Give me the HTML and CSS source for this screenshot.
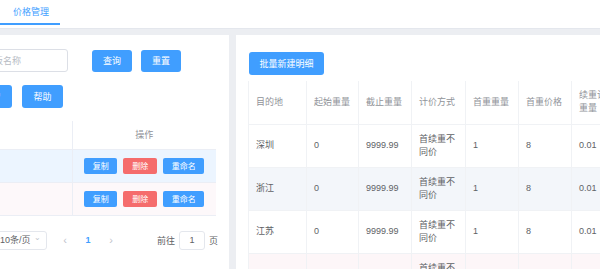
FILE: index.html
```
<!DOCTYPE html>
<html lang="zh-CN">

<head>
    <meta charset="UTF-8">
    <meta name="viewport" content="width=device-width, initial-scale=1.0">
    <title>价格管理</title>

    <link rel="stylesheet" href="styles.css">
</head>

<body>

    <header class="topbar">
        <div class="tab">价格管理</div>
    </header>

    <main class="page">

        <section class="card left">
            <div class="left-inner">

                <div class="form-row">
                    <input class="input name" type="text" placeholder="请输入模板名称">
                    <button class="btn query">查询</button>
                    <button class="btn">重置</button>
                </div>

                <div class="form-row second">
                    <button class="btn add">新增</button>
                    <button class="btn">帮助</button>
                </div>

                <table class="tpl-table">
                    <thead>
                        <tr>
                            <th class="col-name"></th>
                            <th class="col-op">操作</th>
                        </tr>
                    </thead>
                    <tbody>
                        <tr class="current">
                            <td></td>
                            <td class="ops">
                                <button class="mini">复制</button>
                                <button class="mini danger">删除</button>
                                <button class="mini wide">重命名</button>
                            </td>
                        </tr>
                        <tr class="hover">
                            <td></td>
                            <td class="ops">
                                <button class="mini">复制</button>
                                <button class="mini danger">删除</button>
                                <button class="mini wide">重命名</button>
                            </td>
                        </tr>
                    </tbody>
                </table>

                <div class="pager">
                    <div class="size-select">10条/页 <span class="arrow">&#8964;</span></div>
                    <span class="pg-btn">&lsaquo;</span>
                    <span class="pg-num">1</span>
                    <span class="pg-btn">&rsaquo;</span>
                    <span class="goto">前往</span>
                    <div class="goto-input">1</div>
                    <span class="goto-unit">页</span>
                </div>

            </div>
        </section>

        <section class="card right">
            <button class="btn batch">批量新建明细</button>

            <table class="detail-table">
                <thead>
                    <tr>
                        <th style="width: 58px">目的地</th>
                        <th style="width: 52px">起始重量</th>
                        <th style="width: 53px">截止重量</th>
                        <th style="width: 54px">计价方式</th>
                        <th style="width: 53px">首重重量</th>
                        <th style="width: 53px">首重价格</th>
                        <th style="width: 53px">续重计费重量</th>
                        <th style="width: 53px">续重价格</th>
                    </tr>
                </thead>
                <tbody>
                    <tr>
                        <td>深圳</td><td>0</td><td>9999.99</td><td>首续重不同价</td><td>1</td><td>8</td><td>0.01</td><td>1</td>
                    </tr>
                    <tr class="stripe">
                        <td>浙江</td><td>0</td><td>9999.99</td><td>首续重不同价</td><td>1</td><td>8</td><td>0.01</td><td>1</td>
                    </tr>
                    <tr>
                        <td>江苏</td><td>0</td><td>9999.99</td><td>首续重不同价</td><td>1</td><td>8</td><td>0.01</td><td>1</td>
                    </tr>
                    <tr class="hover">
                        <td>上海</td><td>0</td><td>9999.99</td><td>首续重不同价</td><td>1</td><td>8</td><td>0.01</td><td>1</td>
                    </tr>
                </tbody>
            </table>
        </section>

    </main>

</body>

</html>
```

FILE: styles.css
```
* {
    box-sizing: border-box;
}

body {
    margin: 0;
    width: 600px;
    height: 269px;
    overflow: hidden;
    background-color: #eceef2;
    font-family: "Liberation Sans", "Noto Sans CJK SC", sans-serif;
    font-size: 9px;
    color: #606266;
}

.topbar {
    height: 29px;
    background-color: #fff;
    border-bottom: 1px solid #e4e7ed;
}

.tab {
    width: 60px;
    height: 25px;
    padding-left: 13px;
    line-height: 25px;
    color: #409eff;
    border-bottom: 2px solid #409eff;
}

.page {
    display: flex;
    gap: 7px;
    padding-top: 6px;
    height: 240px;
}

.card {
    background-color: #fff;
    overflow: hidden;
}

.left {
    width: 229px;
    flex-shrink: 0;
}

/* content is cut on the left, like in the screenshot */
.left-inner {
    margin-left: -60px;
    width: 289px;
    padding-top: 14px;
}

.form-row {
    display: flex;
    align-items: center;
    gap: 9px;
    height: 23px;
}

.form-row.second {
    margin-top: 13px;
    gap: 10px;
}

.input {
    width: 128px;
    height: 23px;
    border: 1px solid #dcdfe6;
    border-radius: 3px;
    padding: 0 8px 0 17px;
    font-family: inherit;
    font-size: 9px;
    color: #606266;
}

.input::placeholder {
    color: #b8bcc4;
}

.query {
    margin-left: 15px;
}

.add {
    margin-left: 31px;
}

.btn {
    height: 22px;
    padding: 0 11px;
    border: none;
    border-radius: 3px;
    background-color: #409eff;
    color: #fff;
    font-family: inherit;
    font-size: 9px;
    white-space: nowrap;
}

.second .btn {
    height: 23px;
    width: 41px;
    padding: 0;
}

.tpl-table {
    margin-top: 13px;
    width: 276px;
    border-collapse: collapse;
    table-layout: fixed;
}

.tpl-table th {
    height: 28px;
    font-weight: normal;
    color: #909399;
    border-bottom: 1px solid #ebeef5;
}

.tpl-table th.col-name {
    width: 132px;
}

.tpl-table th.col-op {
    text-align: center;
    padding: 0;
    border-left: 1px solid #ebeef5;
}

.tpl-table td {
    height: 33px;
    border-bottom: 1px solid #ebeef5;
}

.tpl-table td.ops {
    text-align: center;
    border-left: 1px solid #ebeef5;
    font-size: 0;
}

.tpl-table tr.current td {
    background-color: #ecf5ff;
}

.tpl-table tr.hover td {
    background-color: #fdf8fa;
}

.mini {
    height: 16px;
    width: 33px;
    margin: 0 3px;
    padding: 0;
    border: none;
    border-radius: 2px;
    background-color: #409eff;
    color: #fff;
    font-family: inherit;
    font-size: 8px;
}

.mini.danger {
    background-color: #f56c6c;
    width: 34px;
}

.mini.wide {
    width: 41px;
}

.pager {
    display: flex;
    align-items: center;
    margin-top: 15px;
    height: 19px;
    color: #606266;
}

.size-select {
    margin-left: 52px;
    width: 55px;
    height: 19px;
    border: 1px solid #e4e7ed;
    border-radius: 3px;
    padding-left: 7px;
    line-height: 17px;
    position: relative;
}

.size-select .arrow {
    position: absolute;
    right: 5px;
    top: -3px;
    color: #c0c4cc;
    font-size: 8px;
}

.pg-btn {
    width: 16px;
    text-align: center;
    color: #c0c4cc;
    font-size: 11px;
}

.pager .pg-btn:first-of-type {
    margin-left: 10px;
}

.pg-num {
    width: 16px;
    margin: 0 7px;
    text-align: center;
    color: #409eff;
    font-weight: bold;
}

.goto {
    margin-left: 38px;
}

.goto-input {
    margin-left: 4px;
    width: 26px;
    height: 19px;
    border: 1px solid #e4e7ed;
    border-radius: 3px;
    text-align: center;
    line-height: 17px;
}

.goto-unit {
    margin-left: 4px;
}

.right {
    flex: 1;
    padding: 17px 0 0 12px;
}

.batch {
    height: 23px;
    width: 75px;
    padding: 0;
    margin-left: 1px;
}

.detail-table {
    margin-top: 6px;
    border-collapse: collapse;
    table-layout: fixed;
    width: 429px;
}

.detail-table th,
.detail-table td {
    border: 1px solid #f0f2f5;
    padding: 8px 7px;
    line-height: 13px;
    text-align: left;
    vertical-align: middle;
    height: 43px;
}

.detail-table th {
    font-weight: normal;
    color: #909399;
    border-top: none;
}

.detail-table tr.stripe td {
    background-color: #f3f6fa;
}

.detail-table tr.hover td {
    background-color: #fdf6f8;
}
```
